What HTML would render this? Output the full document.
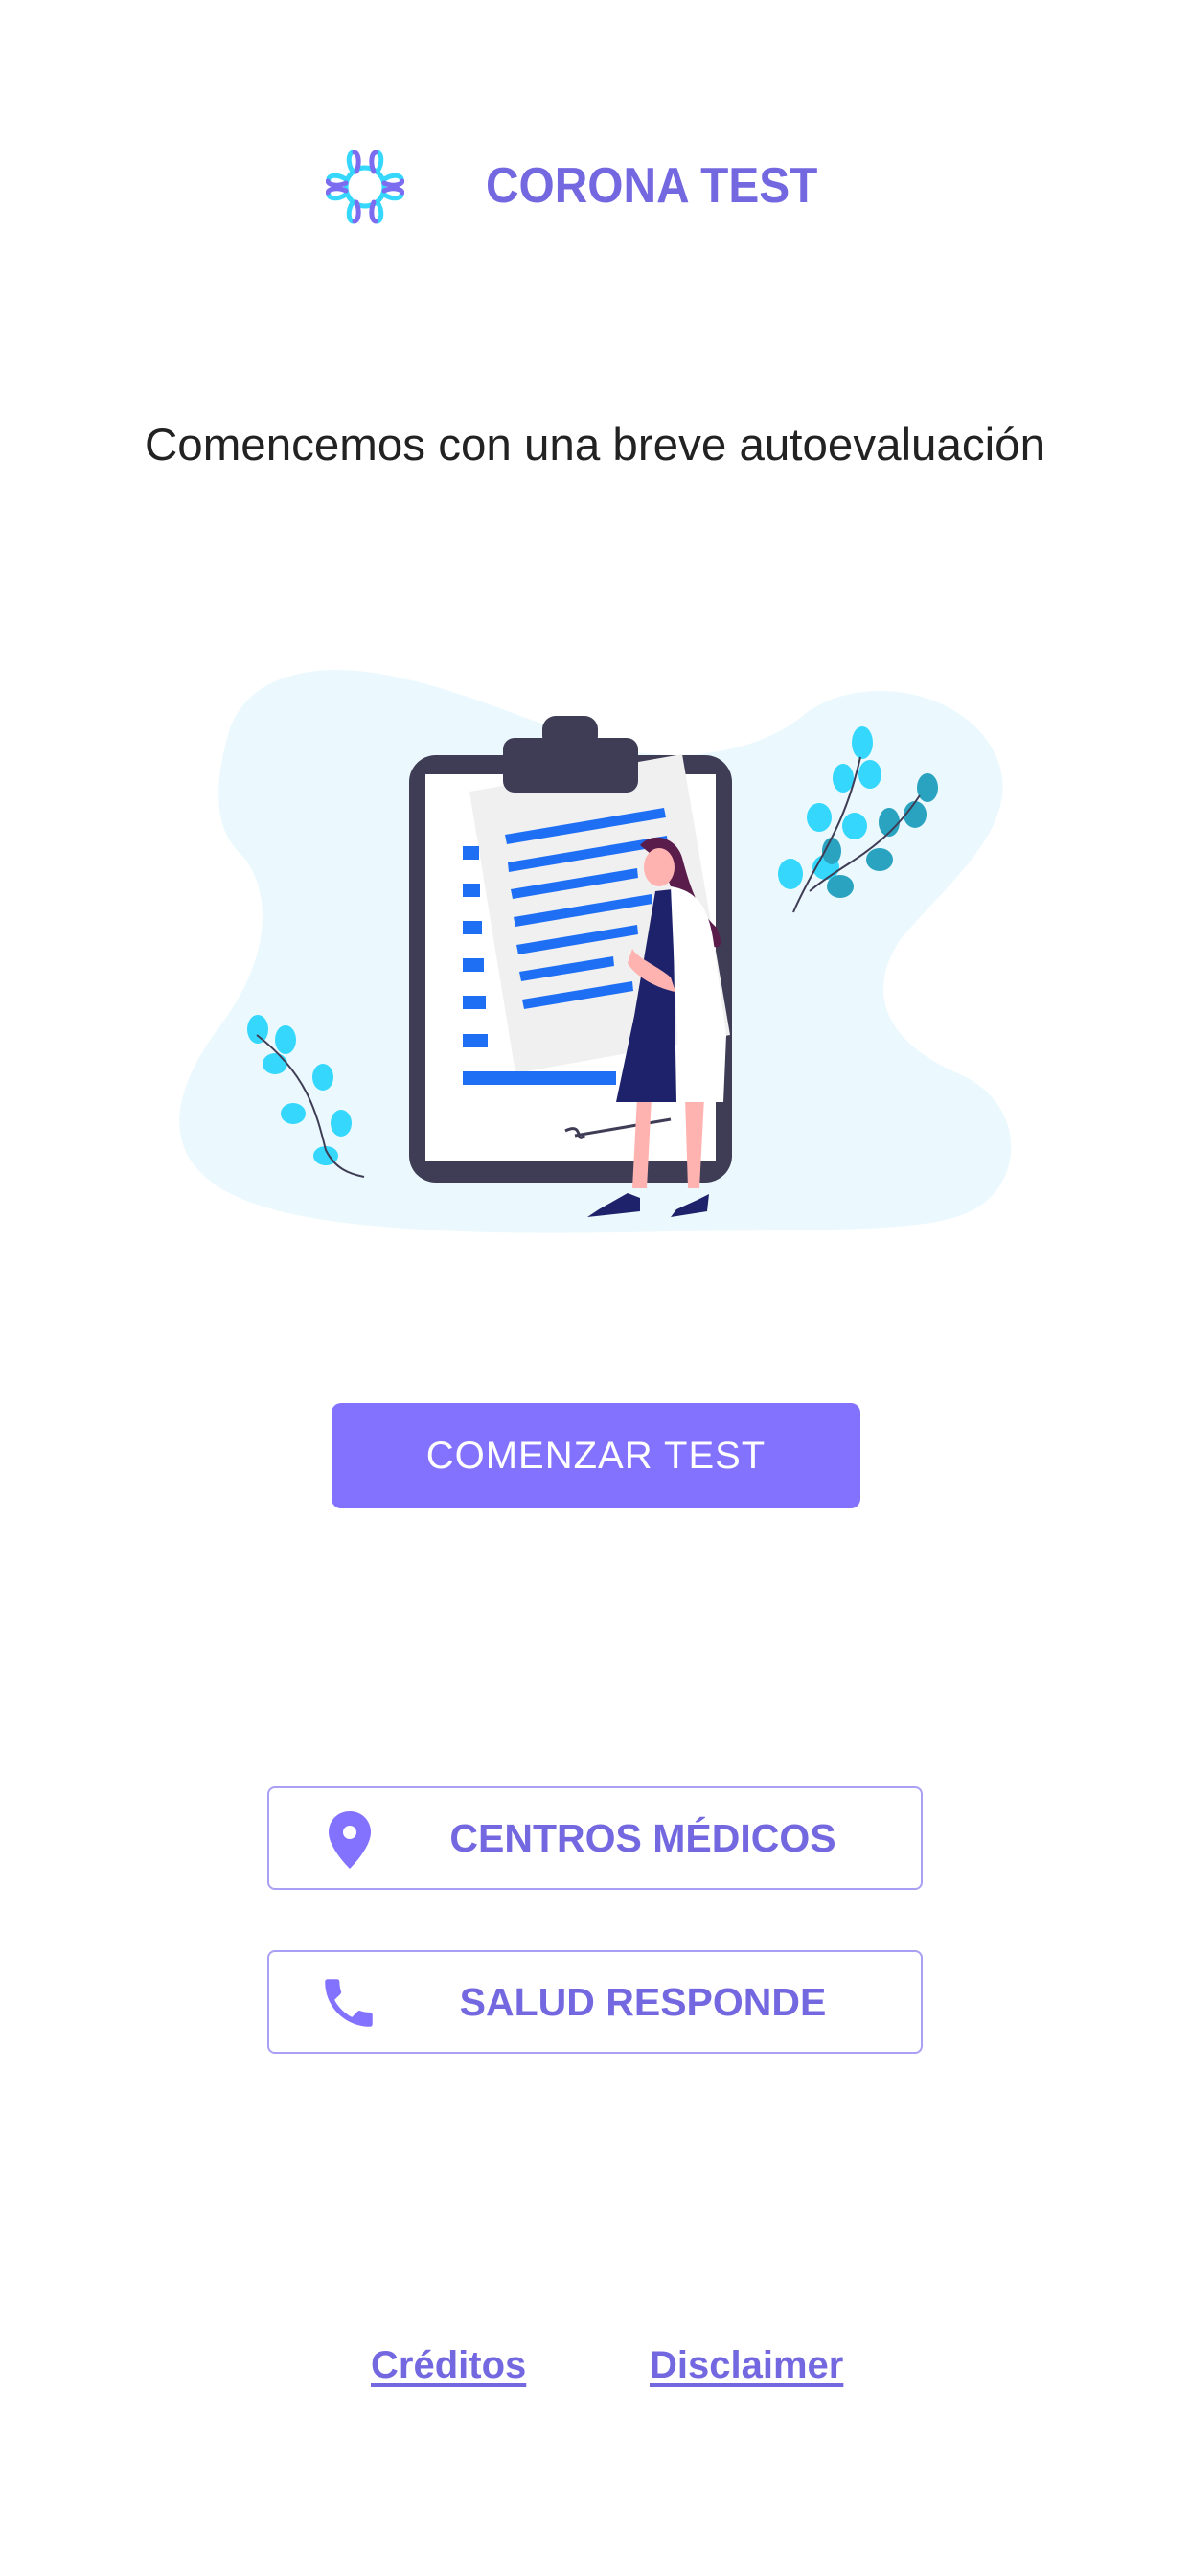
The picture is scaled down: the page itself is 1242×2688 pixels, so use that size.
<!DOCTYPE html>
<html><head><meta charset="utf-8">
<style>
html,body{margin:0;padding:0;background:#fff;}
body{width:1242px;height:2688px;position:relative;overflow:hidden;font-family:"Liberation Sans","DejaVu Sans",sans-serif;}
.abs{position:absolute;}
.title{left:507px;top:164px;font-size:52px;font-weight:bold;color:#7468e0;transform:scaleX(0.92);transform-origin:left top;}
.sub{left:0;width:1242px;top:437px;text-align:center;font-size:47.5px;color:#222;}
.btn{left:346px;top:1464px;width:552px;height:110px;background:#8372fd;border-radius:10px;color:#fff;font-size:40px;text-align:center;line-height:110px;letter-spacing:1px;}
.ob{left:279px;width:684px;height:108px;border:2px solid #a9a0f5;border-radius:8px;box-sizing:border-box;color:#7468e0;font-size:41px;font-weight:bold;line-height:104px;}
.ob span{position:absolute;left:0;width:100%;text-align:center;padding-left:100px;box-sizing:border-box;}
.link{top:2446px;font-size:40px;font-weight:bold;color:#7468e0;text-decoration:underline;text-underline-offset:6px;}
</style></head><body>
<svg class="abs" style="left:340px;top:155px" width="82" height="80" viewBox="0 0 82 80" fill="none" stroke-width="5" stroke-linecap="round">
 <g stroke="#35d8fc"><circle cx="41" cy="40" r="20"/></g>
 <g stroke="#35d8fc"><path d="M28 24 C22 14 24 5 28 4"/><path d="M54 24 C60 14 58 5 54 4"/><path d="M28 56 C22 66 24 75 28 76"/><path d="M54 56 C60 66 58 75 54 76"/><path d="M21 32 C12 26 3 28 3 32"/><path d="M61 32 C70 26 79 28 79 32"/><path d="M21 48 C12 54 3 52 3 48"/><path d="M61 48 C70 54 79 52 79 48"/></g>
 <g stroke="#7b6cf0"><path d="M32 24 C36 14 34 5 30 4"/><path d="M50 24 C46 14 48 5 52 4"/><path d="M32 56 C36 66 34 75 30 76"/><path d="M50 56 C46 66 48 75 52 76"/><path d="M21 36 C12 40 3 38 2 34"/><path d="M61 36 C70 40 79 38 80 34"/><path d="M21 44 C12 40 3 42 2 46"/><path d="M61 44 C70 40 79 42 80 46"/></g>
</svg>
<div class="abs title">CORONA TEST</div>
<div class="abs sub">Comencemos con una breve autoevaluación</div>

<svg class="abs" style="left:0;top:0" width="1242" height="1300" viewBox="0 0 1242 1300">
 <path d="M330 700 C430 690 560 760 640 780 C720 800 800 780 840 745 C900 700 1010 720 1040 790 C1070 860 990 920 940 980 C900 1040 930 1090 1000 1120 C1070 1150 1070 1230 1020 1260 C980 1285 900 1283 700 1285 C500 1290 330 1285 250 1250 C170 1215 170 1150 230 1070 C290 990 280 920 250 890 C220 860 225 810 240 760 C255 720 290 705 330 700Z" fill="#ebf9fe"/>
 <rect x="427" y="788" width="337" height="446" rx="28" fill="#3f3d56"/>
 <rect x="444" y="808" width="303" height="403" fill="#fff"/>
 <polygon points="490,826 712,787 762,1080 538,1120" fill="#f0f0f0"/>
 <rect x="525" y="770" width="141" height="57" rx="12" fill="#3f3d56"/>
 <rect x="566" y="747" width="58" height="35" rx="14" fill="#3f3d56"/>
 <g fill="#1f6ff5">
  <rect x="483" y="883" width="17" height="14"/><rect x="483" y="922" width="18" height="14"/><rect x="483" y="961" width="20" height="14"/><rect x="483" y="1000" width="22" height="14"/><rect x="483" y="1039" width="24" height="14"/><rect x="483" y="1079" width="26" height="14"/><rect x="483" y="1118" width="160" height="14"/>
  <polygon points="527,871 693,843 695,853 529,881"/><polygon points="530,900 696,872 697,882 531,910"/><polygon points="533,928 665,906 666,916 535,938"/><polygon points="536,957 680,933 681,943 538,967"/><polygon points="539,986 665,965 666,975 541,996"/><polygon points="542,1014 640,998 641,1008 544,1024"/><polygon points="545,1043 660,1024 661,1034 547,1053"/>
 </g>
 <path d="M590 1180 C610 1170 600 1195 610 1185 M600 1185 L700 1168" stroke="#3f3d56" stroke-width="3" fill="none"/>
 <path d="M668 882 C680 868 705 872 712 895 C720 925 728 950 748 968 C755 985 752 990 745 988 C725 980 718 965 712 955 L690 900 Z" fill="#5a1c4b"/>
 <ellipse cx="688" cy="905" rx="16" ry="20" fill="#feb3b1"/>
 <path d="M665 1145 L660 1240 L675 1240 L680 1145Z M715 1145 L718 1240 L730 1240 L735 1145Z" fill="#feb3b1"/>
 <path d="M684 930 L702 928 L706 1150 L643 1150 L662 1060Z" fill="#1e226a"/>
 <path d="M700 925 C730 930 740 950 745 985 L758 1080 L755 1150 L710 1150 Z" fill="#fff"/>
 <path d="M660 990 C665 1000 690 1010 700 1020 L705 1035 C680 1030 660 1015 655 1005Z" fill="#feb3b1"/>
 <path d="M613 1270 L668 1264 L668 1250 L655 1245 L625 1262Z M700 1270 L738 1264 L740 1246 L728 1252 L706 1262Z" fill="#1e226a"/>
 <g fill="#35d8fc">
  <ellipse cx="900" cy="775" rx="11" ry="17"/><ellipse cx="880" cy="812" rx="11" ry="15"/><ellipse cx="908" cy="808" rx="12" ry="15"/><ellipse cx="855" cy="853" rx="13" ry="15"/><ellipse cx="892" cy="862" rx="13" ry="14"/><ellipse cx="825" cy="912" rx="13" ry="16"/><ellipse cx="862" cy="905" rx="14" ry="13"/>
  <ellipse cx="269" cy="1074" rx="11" ry="15"/><ellipse cx="298" cy="1085" rx="11" ry="15"/><ellipse cx="287" cy="1110" rx="13" ry="11"/><ellipse cx="337" cy="1124" rx="11" ry="14"/><ellipse cx="306" cy="1162" rx="13" ry="11"/><ellipse cx="356" cy="1172" rx="11" ry="14"/><ellipse cx="340" cy="1206" rx="13" ry="10"/>
 </g>
 <g fill="#29a3c0">
  <ellipse cx="968" cy="822" rx="11" ry="15"/><ellipse cx="955" cy="850" rx="12" ry="14"/><ellipse cx="928" cy="858" rx="11" ry="15"/><ellipse cx="918" cy="897" rx="14" ry="12"/><ellipse cx="877" cy="925" rx="14" ry="12"/><ellipse cx="868" cy="888" rx="10" ry="14"/>
 </g>
 <path d="M828 952 C850 900 880 870 898 790 M845 930 C880 900 920 890 960 830" stroke="#3f3d56" stroke-width="2" fill="none"/>
 <path d="M268 1080 C320 1120 330 1160 340 1200 C350 1220 365 1225 380 1228" stroke="#3f3d56" stroke-width="2" fill="none"/>
</svg>

<div class="abs btn">COMENZAR TEST</div>

<div class="abs ob" style="top:1864px">
 <svg class="abs" style="left:60px;top:22px" width="48" height="64" viewBox="0 0 48 64"><path d="M24 2 C11 2 2 12 2 24 C2 36 14 52 24 62 C34 52 46 36 46 24 C46 12 37 2 24 2Z" fill="#8372fd"/><circle cx="24" cy="24" r="7" fill="#fff"/></svg>
 <span>CENTROS MÉDICOS</span>
</div>
<div class="abs ob" style="top:2035px">
 <svg class="abs" style="left:50px;top:18px" width="66" height="70" viewBox="0 0 24 24"><path d="M6.6 10.8c1.4 2.8 3.8 5.1 6.6 6.6l2.2-2.2c.3-.3.7-.4 1-.2 1.1.4 2.3.6 3.6.6.6 0 1 .4 1 1V20c0 .6-.4 1-1 1C10.6 21 3 13.4 3 4c0-.6.4-1 1-1h3.5c.6 0 1 .4 1 1 0 1.3.2 2.5.6 3.6.1.3 0 .7-.2 1z" fill="#8372fd"/></svg>
 <span>SALUD RESPONDE</span>
</div>

<div class="abs link" style="left:387px">Créditos</div>
<div class="abs link" style="left:678px">Disclaimer</div>
</body></html>
